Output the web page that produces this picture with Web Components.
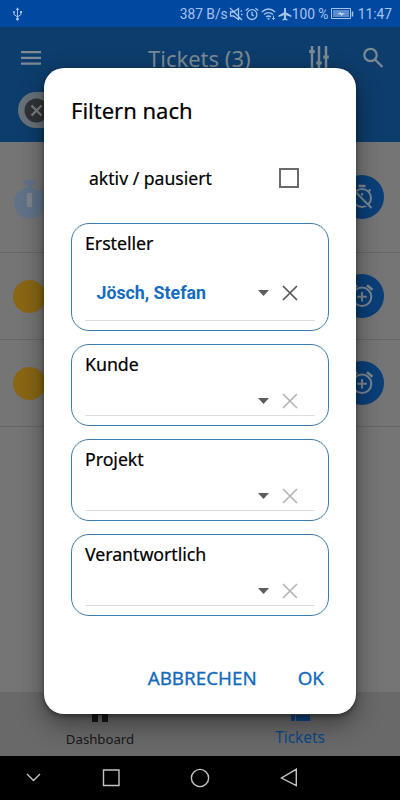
<!DOCTYPE html>
<html lang="de"><head><meta charset="utf-8"><title>Tickets</title>
<style>html,body{margin:0;width:400px;height:800px;overflow:hidden;background:#000}</style></head><body>
<ticket-app></ticket-app>
<script>
const define=(name,css,html)=>customElements.define(name,class extends HTMLElement{
  constructor(){super();this.attachShadow({mode:'open'}).innerHTML=`<style>*{box-sizing:border-box}svg{display:block;flex:none}${css}</style>${html}`;}
  connectedCallback(){const l=this.shadowRoot.querySelector('label');if(l)l.textContent=this.getAttribute('label');}
});

define('status-bar',`:host{display:flex;align-items:center;height:27px;background:#0048a0;color:#a6c4ee;font:13.8px/27px Roboto,sans-serif;white-space:nowrap;box-sizing:border-box;padding:1px 8px 0 12px}
.usb{margin-right:auto}`,
`<svg class="usb" width="11" height="14" viewBox="0 0 11 14" fill="none" stroke="#a6c4ee" stroke-width="1"><path d="M5.5 2v10M2 5v2.5l3.5 2.5 3.5-2.5V5"/><path d="M3.8 3 5.5.3 7.2 3z" fill="#a6c4ee" stroke="none"/><circle cx="5.5" cy="12" r="1.5" fill="#a6c4ee" stroke="none"/><circle cx="2" cy="5" r="1" fill="#a6c4ee" stroke="none"/><path d="M8 4h2v2H8z" fill="#a6c4ee" stroke="none"/></svg>
<span style="width:49px">387 B/s</span>
<svg width="14" height="14" viewBox="0 0 14 14" fill="none" stroke="#a6c4ee" stroke-width="1.3"><path d="M1.5 5h3l5-3.5v11L4.500 9h-3zM1 1l12 12M11.500 4.500l1.500-1M12 7.500h1.500"/></svg>
<svg style="margin-left:2px" width="14" height="14" viewBox="0 0 14 14" fill="none" stroke="#a6c4ee" stroke-width="1.3"><circle cx="7" cy="7.600" r="4.900"/><path d="M7 4.800v3l2 1.200M.8 3.600 3.600 1.200M13.200 3.600 10.400 1.200"/></svg>
<svg style="margin-left:2px" width="16" height="14" viewBox="0 0 16 14" fill="none" stroke="#a6c4ee" stroke-width="1.300"><path d="M.8 5q6.700-6 13.400 0M3 7.600q4.500-4 9 0M5.200 10q2.300-2 4.600 0"/><circle cx="7.500" cy="11.800" r="1" fill="#a6c4ee" stroke="none"/><path d="M12.500 8.500v4M11 11l1.500 1.500L14 11" stroke-width=".9"/></svg>
<svg style="margin-left:1px" width="14" height="14" viewBox="0 0 14 14" fill="#a6c4ee"><path d="M6 1.500Q7 0 8 1.500V5.200l5.500 3.300v1.400L8 8.300v3l1.500 1.200v1L7 12.900l-2.500.6v-1L6 11.300v-3L.5 9.900V8.500L6 5.200z"/></svg>
<span style="width:39px">100 %</span>
<svg width="23" height="12" viewBox="0 0 23 12" fill="none" stroke="#a6c4ee"><path d="M.5.5h19v10H.5z"/><path d="M2 2h16v7H2z" fill="#5d8ccc" stroke="none"/><path d="M21.500 3.500v5" stroke-width="1.500"/><path d="m6 6 4-2v1.200h4L10 8V6.500z" fill="#c2daf8" stroke="none"/></svg>
<span style="margin-left:4px">11:47</span>`);

define('app-header',`:host{display:block;height:115px;background:#0d3d6c;color:#7d8993;font-family:"Noto Sans",sans-serif}
.bar{display:grid;grid-template-columns:131px 155px 67px 1fr;height:62px;align-items:center;padding-left:17px}
h1{font-size:22px;line-height:30px;font-weight:400;margin:0;white-space:nowrap}
.chip{margin:3px 0 0 17.500px;width:330px;height:36px;border-radius:18px;background:#68727a;display:flex;align-items:center;padding-left:6px}`,
`<div class="bar"><svg width="28" height="28" viewBox="0 0 28 28" fill="#7d8993"><path d="M4 7h20v2.300H4zm0 5.700h20V15H4zm0 5.700h20v2.300H4z"/></svg><h1>Tickets (3)</h1>
<svg style="margin-left:4px" width="24" height="28" viewBox="0 0 24 28" fill="none" stroke="#7d8993" stroke-width="2.500"><path d="M5 2v25M12 2v25M19 2v25"/><path d="M2.200 7.500h5.600M9.200 19h5.600M16.200 13h5.600" stroke-width="3"/></svg>
<svg style="margin-left:-9px" width="24" height="24" viewBox="0 0 24 24" fill="none" stroke="#7d8993" stroke-width="2.200"><circle cx="9.500" cy="9" r="6.200"/><path d="m14 13.500 7.500 7.500"/></svg></div>
<div class="chip"><svg width="25" height="25" viewBox="0 0 25 25"><circle cx="12.500" cy="12.500" r="12" fill="#313437"/><path d="m7.500 7.500 10 10m0-10-10 10" stroke="#7b7f82" stroke-width="2.300"/></svg></div>`);

define('ticket-row',`:host{display:flex;align-items:center;justify-content:space-between;box-sizing:border-box;height:87px;padding:0 16px 0 13px;background:#757575;border-bottom:1px solid #666}
:host([stopped]){height:111px}.fab{width:44px;height:44px;border-radius:50%;background:#0a3f78;display:grid;place-items:center}
.dot{width:33px;height:33px;border-radius:50%;background:#896613}
.watch,.off{display:none}:host([stopped]) :is(.watch,.off){display:block}:host([stopped]) :is(.dot,.on){display:none}`,
`<i class="dot"></i><svg class="watch" width="33" height="42" viewBox="0 0 33 42" style="margin-top:6px"><circle cx="16.500" cy="24" r="15.500" fill="#617389"/><path d="M11 1h11v5h-3v4h-5V6h-3zM27 12l2-2 4 4-2 2z" fill="#617389"/><path d="M14 14h5v14h-5z" fill="#7e858d"/></svg>
<div class="fab"><svg class="on" width="28" height="28" viewBox="0 0 28 28" fill="none" stroke="#7b8792" stroke-width="2"><circle cx="14" cy="14.800" r="9.300"/><path d="M14 10v9.600M9.200 14.800h9.600"/><path d="m3.500 7.700 5.500-4.500M24.500 7.700 19 3.200" stroke-width="2.500"/></svg>
<svg class="off" width="28" height="28" viewBox="0 0 28 28" fill="none" stroke="#7b8792" stroke-width="2"><circle cx="14" cy="15" r="9"/><path d="M10.500 3h7" stroke-width="2.500"/><path d="M20.500 8.500l2-2M14 10v2.500"/><path d="M3 6.500 22.500 26" stroke="#0a3f78" stroke-width="2"/><path d="M3.500 5 23.500 25"/></svg></div>`);

define('tab-bar',`:host{display:grid;grid-template-columns:200px 200px;height:64px;background:#696969;font-family:"Noto Sans",sans-serif}
div{display:flex;flex-direction:column;align-items:center;padding-top:6px}span{line-height:22px;color:#171717;font-size:13.200px;margin-top:6px}.a{color:#0b4788;font-size:15.400px;margin-top:5px}`,
`<div><svg width="24" height="24" viewBox="0 0 24 24" fill="#171717"><path d="M12 3 1 13h3v11h6v-7h4v7h6V13h3z"/></svg><span>Dashboard</span></div>
<div><svg width="24" height="24" viewBox="0 0 24 24" fill="#0b4788"><path d="M3 4h4v5H3zm5 0h14v5H8zM3 10h4v6H3zm5 0h14v6H8zM3 17h4v6H3zm5 0h14v6H8z"/></svg><span class="a">Tickets</span></div>`);

define('system-nav',`:host{display:block;height:44px;background:#000}`,
`<svg width="400" height="44" viewBox="0 0 400 44" fill="none" stroke="#c3c3c3" stroke-width="1.400"><path d="m27 18 6.500 6.500L40 18M103.500 14h15.500v15.500h-15.500zM296.300 13.300v16.200L281.500 22z"/><circle cx="200" cy="22" r="8.600"/></svg>`);

define('filter-field',`:host{display:flex;flex-direction:column;box-sizing:border-box;height:82px;border:1px solid #3c7bad;border-radius:18px;padding:6px 13px 9px;font-family:"Noto Sans",sans-serif;--x:#b5b5b5}
:host([filled]){height:108px;--x:#555}label{font-size:17.800px;line-height:26px;letter-spacing:-.05px;-webkit-text-stroke:.2px #000;color:#000}
.value{flex:1;display:flex;align-items:flex-end;border-bottom:1px solid #ddd;padding:0 17px 5px 11.500px}:host([filled]) .value{padding-bottom:18px}
::slotted(*){font:700 17.800px/18px Roboto,sans-serif;color:#136cc0}.sel{margin-left:auto;display:flex;align-items:center;gap:13px;height:18px}`,
`<label></label><div class="value"><slot></slot><div class="sel"><svg width="11" height="6" viewBox="0 0 11 6"><path d="M0 0h11L5.500 6z" fill="#5d5d5d"/></svg><svg width="16" height="16" viewBox="0 0 16 16" style="stroke:var(--x)" stroke-width="1.700"><path d="m1 1 14 14M15 1 1 15"/></svg></div></div>`);

define('filter-dialog',`:host{display:flex;flex-direction:column;box-sizing:border-box;width:312px;height:646px;padding:26px 27px 0 27px;background:#fff;border-radius:20px;box-shadow:0 10px 26px rgba(0,0,0,.42),0 2px 5px rgba(0,0,0,.4);font-family:"Noto Sans",sans-serif;color:#000}
h2{font-size:22px;line-height:32px;font-weight:400;margin:0;-webkit-text-stroke:.2px #000}
.check{display:flex;justify-content:space-between;align-items:center;padding:0 30px 0 18px;margin:39px 0 32px;height:26px;font-size:17.600px;-webkit-text-stroke:.2px #000}
.box{width:20px;height:20px;border:2px solid #6a6a6a}.fields{display:grid;gap:13px}
.actions{display:flex;justify-content:flex-end;gap:41px;padding-right:5px;margin-top:48px;font-size:18.800px;line-height:28px;color:#126abb;-webkit-text-stroke:.3px #126abb}`,
`<h2>Filtern nach</h2><div class="check"><span>aktiv / pausiert</span><i class="box"></i></div>
<div class="fields"><filter-field label="Ersteller" filled><span>Jösch, Stefan</span></filter-field><filter-field label="Kunde"></filter-field><filter-field label="Projekt"></filter-field><filter-field label="Verantwortlich"></filter-field></div>
<div class="actions"><span>ABBRECHEN</span><span>OK</span></div>`);

define('ticket-app',`:host{display:flex;flex-direction:column;position:relative;width:400px;height:800px;overflow:hidden}
main{flex:1;background:#757575}filter-dialog{position:absolute;left:44px;top:68px}`,
`<status-bar></status-bar><app-header></app-header><main><ticket-row stopped></ticket-row><ticket-row></ticket-row><ticket-row></ticket-row></main><tab-bar></tab-bar><system-nav></system-nav><filter-dialog></filter-dialog>`);
</script></body></html>
